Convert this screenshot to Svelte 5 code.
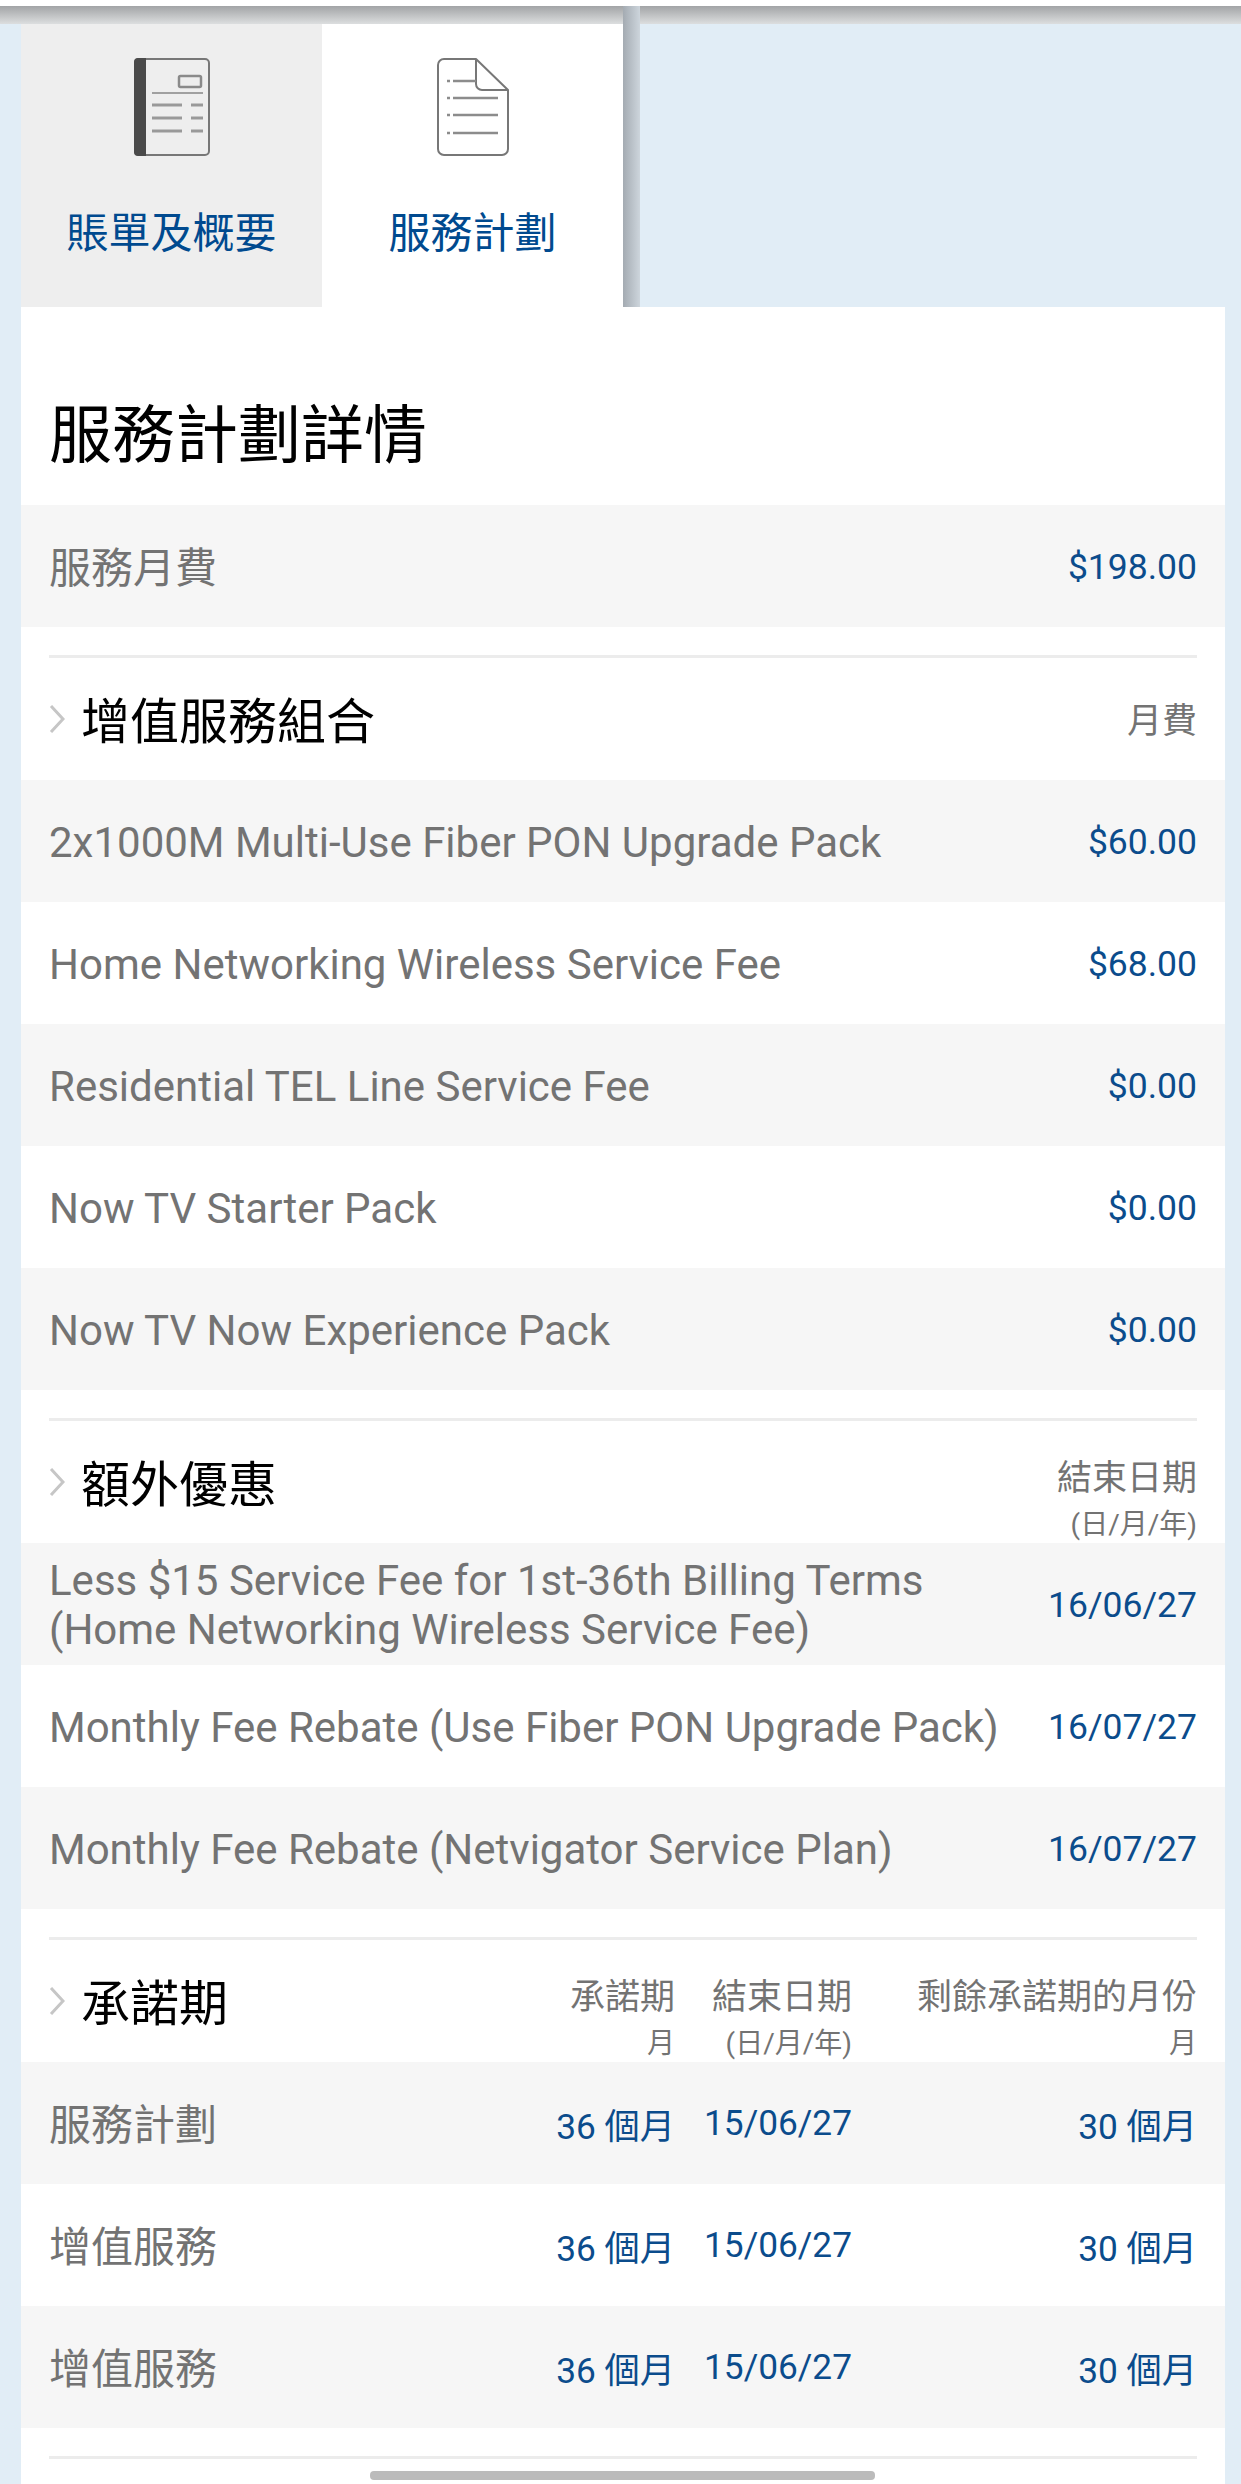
<script>
  const packs = [
    { name: '2x1000M Multi-Use Fiber PON Upgrade Pack', fee: '$60.00' },
    { name: 'Home Networking Wireless Service Fee', fee: '$68.00' },
    { name: 'Residential TEL Line Service Fee', fee: '$0.00' },
    { name: 'Now TV Starter Pack', fee: '$0.00' },
    { name: 'Now TV Now Experience Pack', fee: '$0.00' }
  ];

  const offers = [
    { lines: ['Less $15 Service Fee for 1st-36th Billing Terms', '(Home Networking Wireless Service Fee)'], end: '16/06/27' },
    { lines: ['Monthly Fee Rebate (Use Fiber PON Upgrade Pack)'], end: '16/07/27' },
    { lines: ['Monthly Fee Rebate (Netvigator Service Plan)'], end: '16/07/27' }
  ];

  const terms = [
    { name: '服務計劃', term: '36 個月', end: '15/06/27', left: '30 個月' },
    { name: '增值服務', term: '36 個月', end: '15/06/27', left: '30 個月' },
    { name: '增值服務', term: '36 個月', end: '15/06/27', left: '30 個月' }
  ];
</script>

<div class="page">
  <div class="topshade"></div>

  <div class="wrap">
    <nav class="tabs">
      <button class="tab">
        <svg class="icon" width="76" height="98" viewBox="0 0 76 98">
          <rect x="1" y="1" width="74" height="96" rx="4" fill="#eeeeee" stroke="#777" stroke-width="2" />
          <path d="M4 0h8v98H4a4 4 0 0 1-4-4V4a4 4 0 0 1 4-4z" fill="#4a4a4a" />
          <rect x="45" y="18" width="22" height="11" rx="1.5" fill="none" stroke="#8a8a8a" stroke-width="2.5" />
          <path d="M18 35h51" stroke="#a0a0a0" stroke-width="2" />
          <path d="M18 47h30M57 47h12M18 60h30M57 60h12M18 73h30M57 73h12" stroke="#999" stroke-width="3" />
        </svg>
        <span>賬單及概要</span>
      </button>
      <button class="tab active">
        <svg class="icon" width="72" height="98" viewBox="0 0 72 98">
          <path d="M39 1H7a6 6 0 0 0-6 6v84a6 6 0 0 0 6 6h58a6 6 0 0 0 6-6V32z" fill="#fff" stroke="#777" stroke-width="2" stroke-linejoin="round" />
          <path d="M39 1v25a6 6 0 0 0 6 6h26" fill="none" stroke="#777" stroke-width="2" />
          <path d="M16 23h23M16 40h45M16 57h45M16 75h45" stroke="#8c8c8c" stroke-width="2.5" />
          <path d="M10 23h3M10 40h3M10 57h3M10 75h3" stroke="#8c8c8c" stroke-width="2.5" />
        </svg>
        <span>服務計劃</span>
      </button>
      <div class="tab-edge"></div>
    </nav>

    <main class="card">
      <h1>服務計劃詳情</h1>

      <div class="row">
        <span class="label cjk">服務月費</span>
        <span class="val">$198.00</span>
      </div>

      <hr />
      <div class="head">
        <div class="head-title">
          <svg class="chev" width="16" height="28" viewBox="0 0 16 28"><path d="M2 1l12 13L2 27" fill="none" stroke="#c6c6c6" stroke-width="3" /></svg>
          <h2>增值服務組合</h2>
        </div>
        <div class="col-note single">月費</div>
      </div>
      {#each packs as p}
        <div class="row">
          <span class="label">{p.name}</span>
          <span class="val">{p.fee}</span>
        </div>
      {/each}

      <hr />
      <div class="head">
        <div class="head-title">
          <svg class="chev" width="16" height="28" viewBox="0 0 16 28"><path d="M2 1l12 13L2 27" fill="none" stroke="#c6c6c6" stroke-width="3" /></svg>
          <h2>額外優惠</h2>
        </div>
        <div class="col-note">結束日期<small>(日/月/年)</small></div>
      </div>
      {#each offers as o}
        <div class="row">
          <span class="label">
            {#each o.lines as line}
              <span class="line">{line}</span>
            {/each}
          </span>
          <span class="val">{o.end}</span>
        </div>
      {/each}

      <hr />
      <div class="head term-grid">
        <div class="head-title">
          <svg class="chev" width="16" height="28" viewBox="0 0 16 28"><path d="M2 1l12 13L2 27" fill="none" stroke="#c6c6c6" stroke-width="3" /></svg>
          <h2>承諾期</h2>
        </div>
        <div class="col-note">承諾期<small>月</small></div>
        <div class="col-note">結束日期<small>(日/月/年)</small></div>
        <div class="col-note">剩餘承諾期的月份<small>月</small></div>
      </div>
      {#each terms as t}
        <div class="row term-grid">
          <span class="label cjk">{t.name}</span>
          <span class="val tight">{t.term}</span>
          <span class="val tight">{t.end}</span>
          <span class="val tight">{t.left}</span>
        </div>
      {/each}

      <hr />
    </main>
  </div>

  <div class="scrollbar"></div>
</div>

<style>
  :global(body) {
    margin: 0;
    background: #fff;
  }

  .page {
    position: relative;
    height: 2484px;
    overflow: hidden;
    background: #e1edf6;
    font-family: Roboto, "Noto Sans CJK TC", sans-serif;
    border-top: 6px solid #fff;
    box-sizing: border-box;
  }

  .topshade {
    height: 18px;
    background: linear-gradient(#a2a4a6, #dcdedf);
  }

  .wrap {
    margin: 0 16px 0 21px;
  }

  .tabs {
    display: flex;
    height: 283px;
  }

  .tab {
    width: 301px;
    padding: 34px 0 0;
    border: none;
    background: #eeeeee;
    display: flex;
    flex-direction: column;
    align-items: center;
    font-family: inherit;
    font-size: 42px;
    color: #004a8f;
  }

  .tab.active {
    background: #fff;
  }

  .tab span {
    margin-top: 48px;
    line-height: 60px;
  }

  .icon {
    display: block;
  }

  .tab-edge {
    width: 17px;
    margin-top: -18px;
    background: linear-gradient(to right, #a4abb2, #cdd5dc);
    position: relative;
  }

  .card {
    background: #fff;
    height: 2177px;
  }

  h1 {
    margin: 0;
    height: 198px;
    padding: 99px 0 0 28px;
    box-sizing: border-box;
    font-size: 63px;
    font-weight: 400;
    line-height: 60px;
    color: #000;
  }

  /* stripes by section: first row of each list is grey */
  .row {
    display: flex;
    justify-content: space-between;
    align-items: center;
    height: 122px;
    padding: 2px 28px 0;
    box-sizing: border-box;
    background: #fff;
  }

  h1 + .row,
  .head + .row,
  .head + .row + .row + .row,
  .head + .row + .row + .row + .row + .row {
    background: #f6f6f6;
  }

  .label {
    font-size: 42px;
    line-height: 49px;
    color: #737373;
  }

  .label.cjk {
    margin-top: 2px;
  }

  .line {
    display: block;
  }

  .val {
    font-size: 35.5px;
    color: #0b4c8c;
    text-align: right;
  }

  .val.tight {
    font-size: 35.25px;
    margin-top: -2px;
  }

  hr {
    margin: 28px 28px 0;
    height: 3px;
    border: none;
    background: #ececec;
  }

  .head {
    display: flex;
    justify-content: space-between;
    align-items: flex-start;
    height: 122px;
    padding: 0 28px;
    box-sizing: border-box;
    background: #fff;
  }

  .head-title {
    display: flex;
    align-items: flex-start;
    padding-top: 35px;
  }

  .chev {
    margin: 12px 16px 0 0;
    flex: none;
  }

  h2 {
    margin: 0;
    font-size: 49px;
    font-weight: 400;
    line-height: 60px;
    color: #000;
  }

  .col-note {
    padding-top: 35px;
    font-size: 35px;
    line-height: 46px;
    color: #737373;
    text-align: right;
  }

  .col-note.single {
    padding-top: 41px;
  }

  .col-note small {
    display: block;
    font-size: 28px;
    line-height: 46px;
  }

  .term-grid {
    display: grid;
    grid-template-columns: 1fr 132px 177px 345px;
    align-items: center;
  }

  .term-grid.head {
    align-items: start;
  }

  .scrollbar {
    position: absolute;
    left: 370px;
    top: 2465px;
    width: 505px;
    height: 9px;
    border-radius: 4px;
    background: #bbbbbb;
  }
</style>
